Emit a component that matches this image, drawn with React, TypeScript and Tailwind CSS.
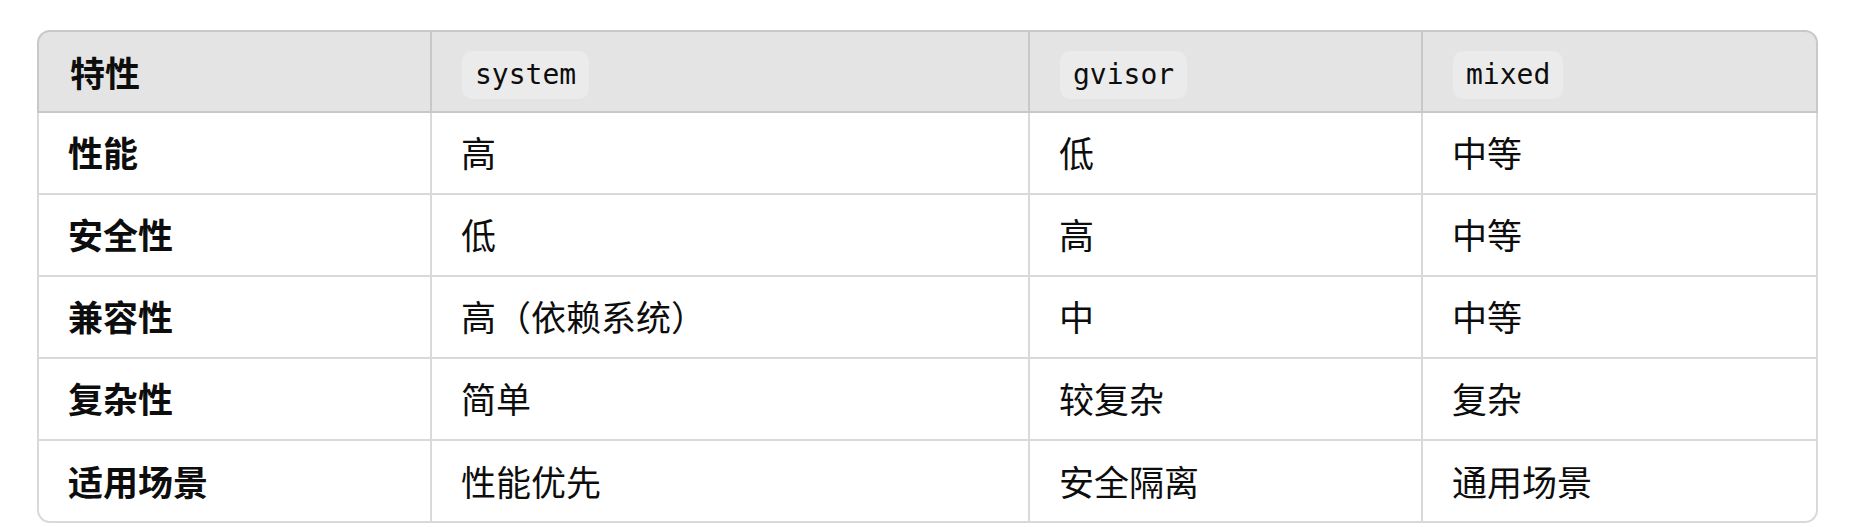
import React from "react";

const cols = ["w-[393px]", "w-[598px]", "w-[393px]", "flex-1"];

const rows: string[][] = [
  ["性能", "高", "低", "中等"],
  ["安全性", "低", "高", "中等"],
  ["兼容性", "高（依赖系统）", "中", "中等"],
  ["复杂性", "简单", "较复杂", "复杂"],
  ["适用场景", "性能优先", "安全隔离", "通用场景"],
];

const headers = ["system", "gvisor", "mixed"];

export default function App() {
  return (
    <div
      className="w-[1865px] h-[527px] bg-white pl-[37px] pt-[30px] text-[#0d0d0d]"
      style={{ fontFamily: '"Noto Sans CJK SC", "Noto Sans", sans-serif' }}
    >
      <div className="w-[1781px] flex flex-col">
        {/* header */}
        <div className="flex h-[83px] bg-[#e4e4e4] border-2 border-[#c8c8c8] rounded-t-[13px]">
          <div className="w-[393px] border-r-2 border-[#c8c8c8] flex items-center pl-[31px] pt-[1px] text-[35px] leading-[40px] font-bold">
            特性
          </div>
          {headers.map((h, i) => (
            <div
              key={h}
              className={`${i === 0 ? "w-[598px]" : i === 1 ? "w-[393px]" : "flex-1"} ${
                i < 2 ? "border-r-2 border-[#c8c8c8]" : ""
              } flex items-center pl-[30px] pt-[6px]`}
            >
              <span
                className="inline-flex items-center h-[48px] px-[13px] rounded-[10px] bg-[#ebebeb] text-[28px] leading-[32px]"
                style={{ fontFamily: '"DejaVu Sans Mono", "Liberation Mono", monospace' }}
              >
                {h}
              </span>
            </div>
          ))}
        </div>
        {/* body */}
        <div className="flex flex-col border-2 border-t-0 border-[#d9d9d9] rounded-b-[13px]">
          {rows.map((r, ri) => (
            <div
              key={ri}
              className={`flex ${ri < rows.length - 1 ? "h-[82px] border-b-2 border-[#d9d9d9]" : "h-[80px]"}`}
            >
              {r.map((c, ci) => (
                <div
                  key={ci}
                  className={`${cols[ci]} ${
                    ci < 3 ? "border-r-2 border-[#d9d9d9]" : ""
                  } flex items-center ${ci === 0 ? "pl-[29px] font-bold" : "pl-[29px]"} text-[35px] leading-[40px] ${
                    ri < rows.length - 1 ? "pb-[2px]" : ""
                  }`}
                >
                  {c}
                </div>
              ))}
            </div>
          ))}
        </div>
      </div>
    </div>
  );
}
